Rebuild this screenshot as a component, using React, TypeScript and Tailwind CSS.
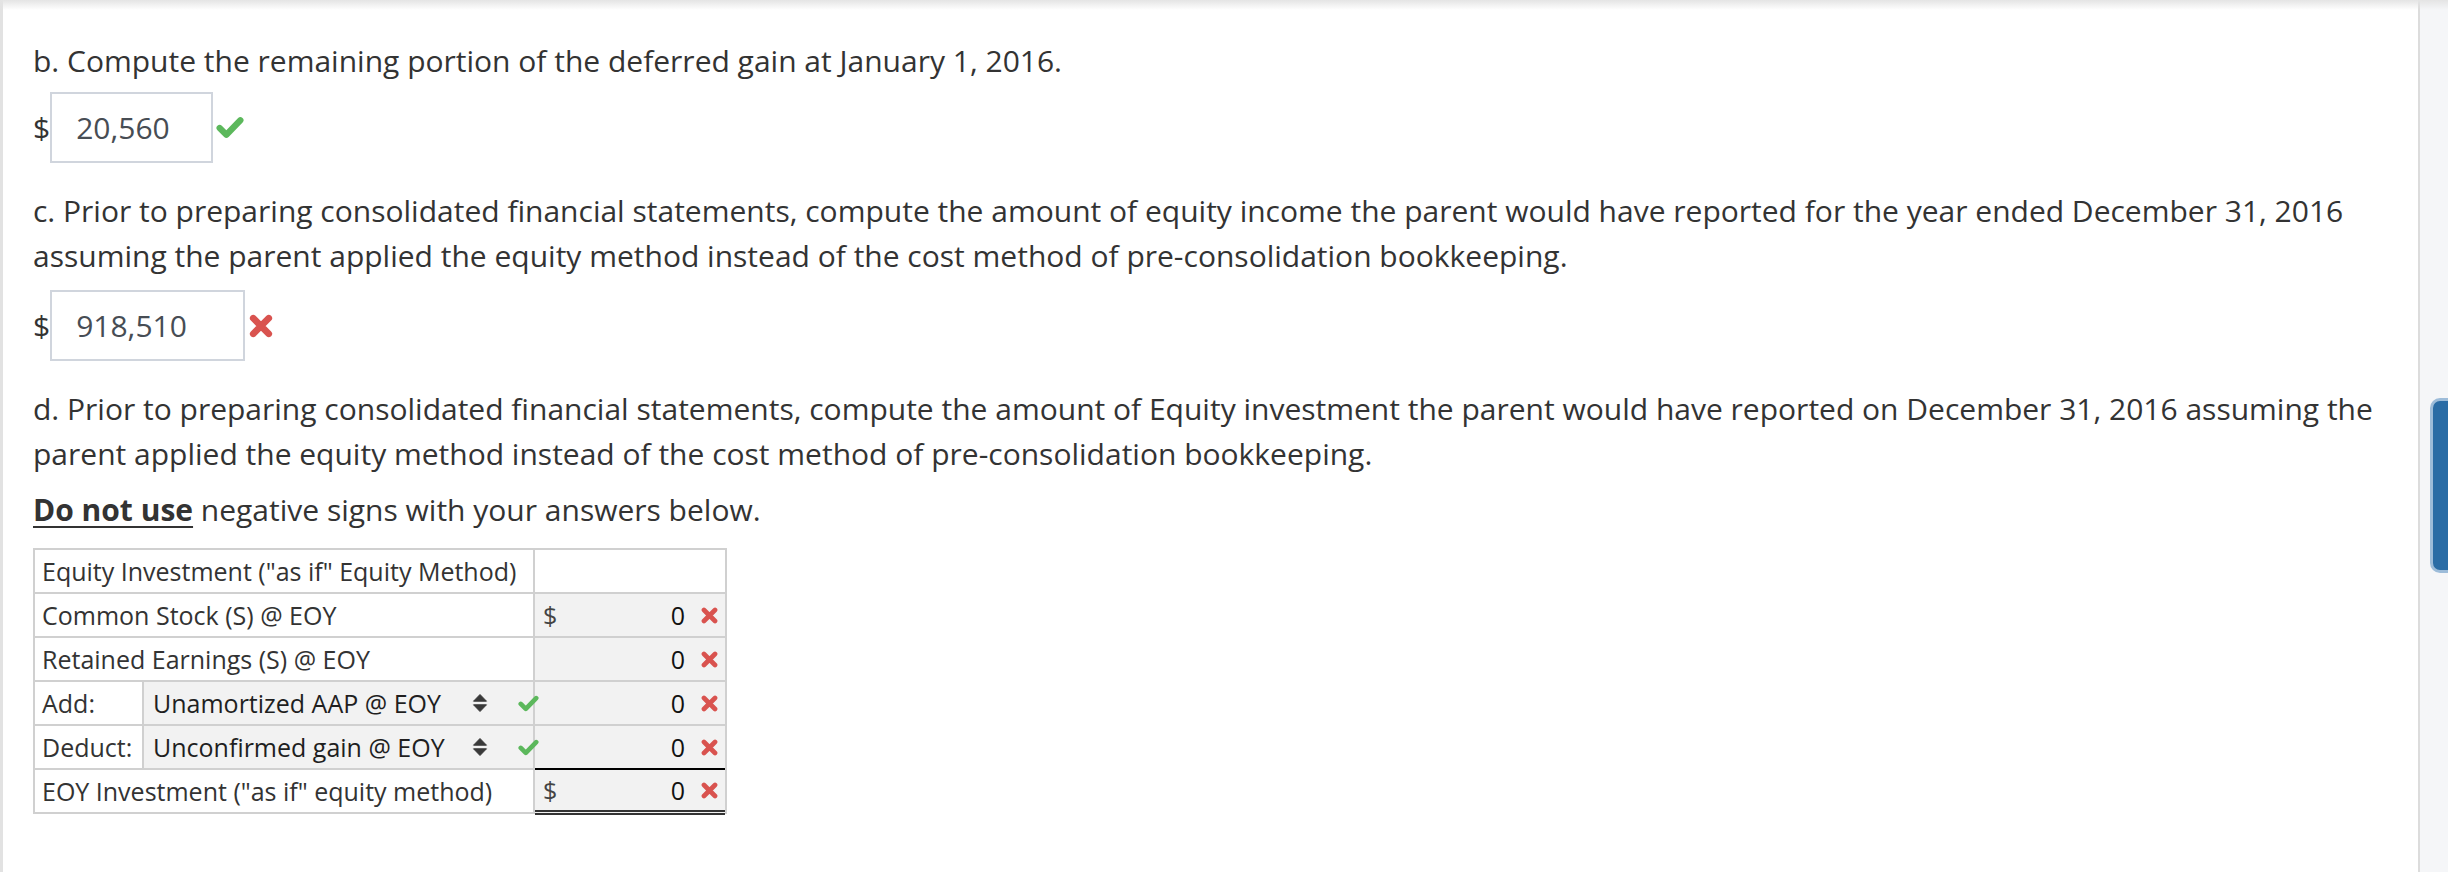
import React from 'react';

const SortIcon = () => (
  <svg width="16" height="20" viewBox="0 0 16 20" className="shrink-0 text-[#3a3a3a]">
    <path d="M1.5 8.2 L8 1.5 L14.5 8.2 Z M1.5 11.8 L8 18.5 L14.5 11.8 Z" fill="currentColor" strokeLinejoin="round" stroke="currentColor" strokeWidth="1" />
  </svg>
);

// thick check mark, drawn in a 27x22 box and scaled
const CheckMark = ({ w, h, className = '' }: { w: number; h: number; className?: string }) => (
  <svg width={w} height={h} viewBox="0 0 27 22" className={`shrink-0 text-[#5cb85c] ${className}`}>
    <polyline points="3.5,11.5 10,18 23.5,4" fill="none" stroke="currentColor" strokeWidth="6" strokeLinecap="round" strokeLinejoin="round" />
  </svg>
);

const CrossMark = ({ size, className = '' }: { size: number; className?: string }) => (
  <svg width={size} height={size} viewBox="0 0 20 20" className={`shrink-0 text-[#d9534f] ${className}`}>
    <path d="M3.5 3.5 L16.5 16.5 M16.5 3.5 L3.5 16.5" fill="none" stroke="currentColor" strokeWidth="5.5" strokeLinecap="round" />
  </svg>
);

const ValueCell = ({ dollar = false, total = false }: { dollar?: boolean; total?: boolean }) => (
  <div
    className={
      total
        ? 'flex items-center bg-[#f2f2f2] pl-[8px] pr-[7px] -mt-[2px] -mb-[3px] border-t-2 border-t-black border-b-[5px] border-b-[#333] border-double'
        : 'flex items-center bg-[#f2f2f2] pl-[8px] pr-[7px]'
    }
  >
    <span className="text-[#444]">{dollar ? '$' : ''}</span>
    <span className="ml-auto text-[#111]">0</span>
    <CrossMark size={17} className="ml-[16px]" />
  </div>
);

const SelectCell = ({ label }: { label: string }) => (
  <div className="flex items-center bg-[#f2f2f2] pl-[9px]">
    <span className="flex-1 text-[#1f1f1f]">{label}</span>
    <SortIcon />
    <CheckMark w={21} h={17} className="relative z-10 ml-[30px] -mr-[6px]" />
  </div>
);

export default function App() {
  return (
    <div className="relative flex h-[872px] w-full overflow-hidden bg-white font-['Open_Sans',sans-serif] text-[#333]">
      <div className="pointer-events-none absolute inset-x-0 top-0 h-[10px] bg-linear-to-b from-[#e4e4e4] to-white/0" />

      <div className="w-[3px] shrink-0 bg-[#e2e2e2]" />

      <main className="flex-1 pl-[30px] pt-[38px] text-[30px] leading-[45px]">
        <p className="whitespace-nowrap">b. Compute the remaining portion of the deferred gain at January 1, 2016.</p>
        <div className="mt-[9px] flex items-center">
          <span>$</span>
          <div className="flex h-[71px] w-[163px] items-center border-2 border-[#d0d5dd] pl-[24px] text-[#474d54]">20,560</div>
          <CheckMark w={28} h={23} className="ml-[3px]" />
        </div>

        <p className="mt-[25px] whitespace-nowrap">
          c. Prior to preparing consolidated financial statements, compute the amount of equity income the parent would have reported for the year ended December 31, 2016
          <br />
          assuming the parent applied the equity method instead of the cost method of pre-consolidation bookkeeping.
        </p>
        <div className="mt-[12px] flex items-center">
          <span>$</span>
          <div className="flex h-[71px] w-[195px] items-center border-2 border-[#d0d5dd] pl-[24px] text-[#474d54]">918,510</div>
          <CrossMark size={24} className="ml-[4px]" />
        </div>

        <p className="mt-[25px] whitespace-nowrap">
          d. Prior to preparing consolidated financial statements, compute the amount of Equity investment the parent would have reported on December 31, 2016 assuming the
          <br />
          parent applied the equity method instead of the cost method of pre-consolidation bookkeeping.
        </p>
        <p className="mt-[11px] whitespace-nowrap">
          <span className="font-bold underline decoration-2 underline-offset-[5px]">Do not use</span> negative signs with your answers below.
        </p>

        <div className="mt-[16px] grid w-[694px] auto-rows-[42px] grid-cols-[107px_389px_190px] gap-[2px] bg-[#d0d0d0] p-[2px] text-[25px] leading-[42px]">
          <div className="col-span-2 flex items-center bg-white pl-[7px]">Equity Investment ("as if" Equity Method)</div>
          <div className="bg-white" />

          <div className="col-span-2 flex items-center bg-white pl-[7px]">Common Stock (S) @ EOY</div>
          <ValueCell dollar />

          <div className="col-span-2 flex items-center bg-white pl-[7px]">Retained Earnings (S) @ EOY</div>
          <ValueCell />

          <div className="flex items-center bg-white pl-[7px]">Add:</div>
          <SelectCell label="Unamortized AAP @ EOY" />
          <ValueCell />

          <div className="flex items-center bg-white pl-[7px]">Deduct:</div>
          <SelectCell label="Unconfirmed gain @ EOY" />
          <ValueCell />

          <div className="col-span-2 flex items-center bg-white pl-[7px]">EOY Investment ("as if" equity method)</div>
          <ValueCell dollar total />
        </div>
      </main>

      <div className="w-[2px] shrink-0 bg-[#dcdcdc]" />
      <aside className="flex w-[28px] shrink-0 flex-col bg-[#f5f6f8]">
        <div className="ml-[10px] mt-[398px] h-[175px] rounded-l-[10px] border-y-[3px] border-l-[3px] border-[#9dbcd9] bg-[#2a6ca5]" />
      </aside>
    </div>
  );
}
